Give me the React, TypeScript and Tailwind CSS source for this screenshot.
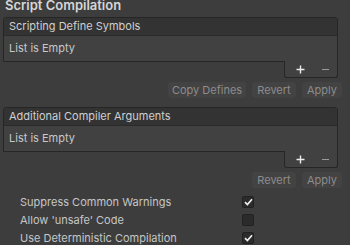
const font = { fontFamily: "Inter, 'Noto Sans', sans-serif" };

function ListBox({ title }: { title: string }) {
  return (
    <div className="flex flex-col">
      <div className="ml-[3px] mr-[12px] border border-[#262626] rounded-t-[3px] overflow-hidden">
        <div className="h-[18px] bg-[#333333] flex items-center pl-[5px] text-[11px] text-[#cfcfcf] border-b border-[#2a2a2a]">
          {title}
        </div>
        <div className="h-[25px] bg-[#414141] flex items-center pl-[5px] text-[11px] text-[#c8c8c8]">
          List is Empty
        </div>
      </div>
      <div className="flex justify-end mr-[12px]">
        <div className="w-[54px] h-[17px] mt-[-1px] border border-t-0 border-[#262626] bg-[#414141] rounded-b-[3px] flex items-center justify-around pl-[2px]">
          <svg width="9" height="9" viewBox="0 0 9 9">
            <path d="M4.5 0.5 V8.5 M0.5 4.5 H8.5" stroke="#ececec" strokeWidth="1.4" fill="none" />
          </svg>
          <span className="w-[7px] h-[1px] bg-[#9a9a9a]" />
        </div>
      </div>
    </div>
  );
}

function Btn({ label, w }: { label: string; w: string }) {
  return (
    <div
      className={`${w} h-[16px] rounded-[3px] bg-[#434343] flex items-center justify-center text-[11px] text-[#8c8c8c]`}
    >
      {label}
    </div>
  );
}

function Check({ label, checked }: { label: string; checked: boolean }) {
  return (
    <div className="h-[18px] flex items-center">
      <div className="w-[242px] pl-[20px] text-[11px] text-[#c6c6c6]">{label}</div>
      <div className="w-[12px] h-[12px] rounded-[2px] bg-[#2b2b2b] border border-[#212121] flex items-center justify-center">
        {checked && (
          <svg width="9" height="8" viewBox="0 0 9 8">
            <path d="M1 4.2 L3.4 6.5 L8 1.2" stroke="#f0f0f0" strokeWidth="1.7" fill="none" />
          </svg>
        )}
      </div>
    </div>
  );
}

export default function App() {
  return (
    <div className="w-[350px] h-[245px] bg-[#3d3d3d] overflow-hidden" style={font}>
      <div className="h-[15px] mt-[-1px] pl-[5px] text-[13px] font-semibold text-[#d6d6d6] leading-[13px]">
        Script Compilation
      </div>
      <div className="mt-[3px]">
        <ListBox title="Scripting Define Symbols" />
      </div>
      <div className="flex justify-end gap-[6px] mt-[4px] pr-[8px]">
        <Btn label="Copy Defines" w="w-[78px]" />
        <Btn label="Revert" w="w-[44px]" />
        <Btn label="Apply" w="w-[40px]" />
      </div>
      <div className="mt-[9px]">
        <ListBox title="Additional Compiler Arguments" />
      </div>
      <div className="flex justify-end gap-[6px] mt-[4px] pr-[8px]">
        <Btn label="Revert" w="w-[44px]" />
        <Btn label="Apply" w="w-[40px]" />
      </div>
      <div className="mt-[5px]">
        <Check label="Suppress Common Warnings" checked />
        <Check label="Allow 'unsafe' Code" checked={false} />
        <Check label="Use Deterministic Compilation" checked />
      </div>
    </div>
  );
}
